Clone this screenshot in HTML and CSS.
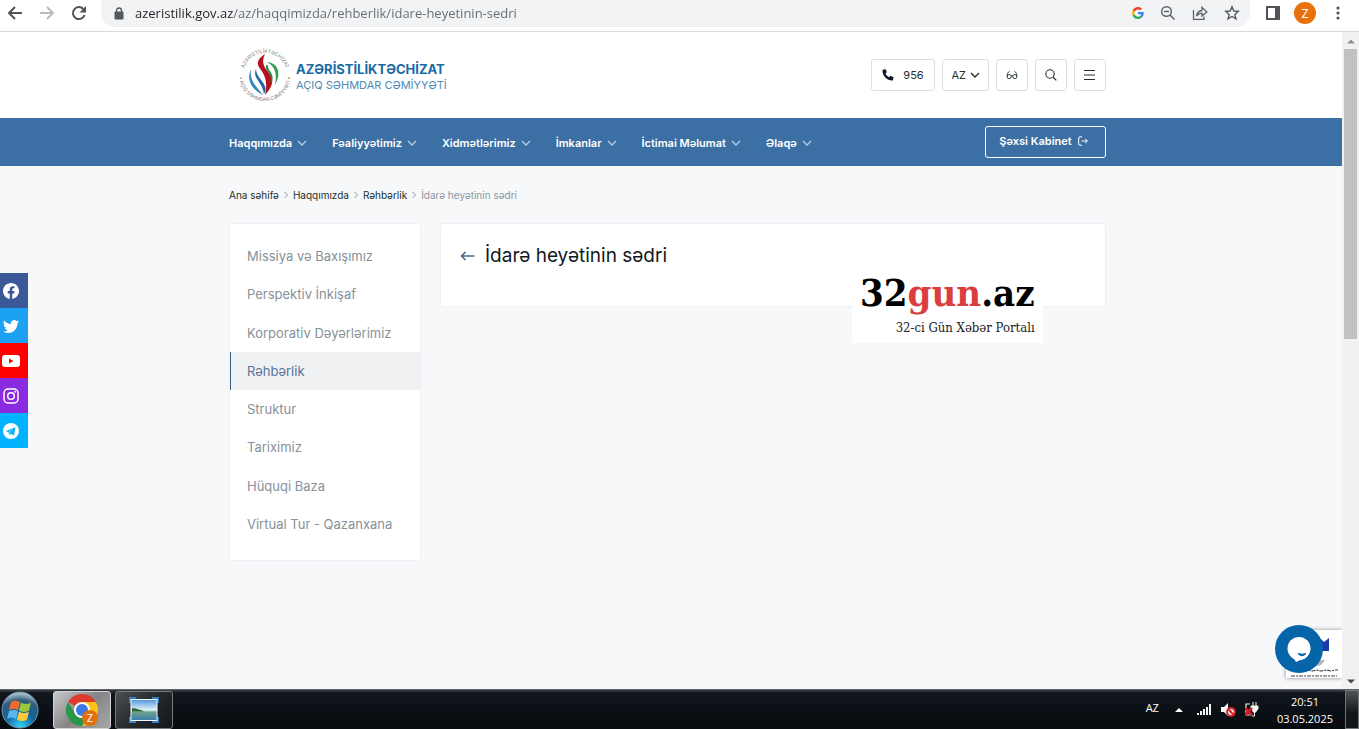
FILE: index.html
```html
<!DOCTYPE html>
<html lang="az">
<head>
    <meta charset="UTF-8">
    <meta name="viewport" content="width=device-width, initial-scale=1.0">
    <title>İdarə heyətinin sədri</title>
    <link rel="stylesheet" href="styles.css">
</head>
<body>

    <!-- Shared icons -->
    <svg class="sprite" aria-hidden="true">
        <symbol id="chevron" viewBox="0 0 10 10"><path d="M1 3l4 4 4-4" fill="none" stroke="currentColor" stroke-width="1.4"/></symbol>
        <symbol id="crumb" viewBox="0 0 6 8"><path d="M1.5 1l3 3-3 3" fill="none" stroke="currentColor"/></symbol>
    </svg>

    <!-- Browser toolbar -->
    <div class="browser-bar">
        <button class="tool back" aria-label="Back"><svg width="16" height="16" viewBox="0 0 16 16"><path d="M15 8H2M8 2L2 8l6 6" fill="none" stroke="#505357" stroke-width="2"/></svg></button>
        <button class="tool forward" aria-label="Forward"><svg width="16" height="16" viewBox="0 0 16 16"><path d="M1 8h13M8 2l6 6-6 6" fill="none" stroke="#b9bbbe" stroke-width="2"/></svg></button>
        <button class="tool reload" aria-label="Reload"><svg width="16" height="16" viewBox="0 0 16 16"><path d="M13.6 10A6 6 0 1 1 12.4 4" fill="none" stroke="#505357" stroke-width="2"/><path d="M15 1v6.500H8.500z" fill="#505357"/></svg></button>
        <div class="address">
            <svg width="10" height="13" viewBox="0 0 10 13"><path d="M2.500 5V3.500a2.500 2.500 0 0 1 5 0V5" fill="none" stroke="#55585d" stroke-width="1.400"/><rect x="0.500" y="4.500" width="9" height="8" rx="1" fill="#55585d"/></svg>
            <input class="url" type="text" aria-label="Address" value="azeristilik.gov.az/az/haqqimizda/rehberlik/idare-heyetinin-sedri">
            <div class="address-icons">
                <button class="tool" aria-label="Google"><svg width="12" height="12" viewBox="0 0 48 48"><path fill="#ea4335" d="M24 9.500c3.500 0 6.700 1.200 9.200 3.600l6.900-6.900C35.900 2.400 30.500 0 24 0 14.600 0 6.500 5.400 2.600 13.200l8 6.200C12.400 13.700 17.700 9.500 24 9.500z"/><path fill="#4285f4" d="M47 24.500c0-1.600-.2-3.100-.4-4.500H24v9h12.900c-.6 3-2.300 5.500-4.800 7.200l7.700 6C44.400 38 47 31.800 47 24.500z"/><path fill="#fbbc05" d="M10.500 28.600a14.500 14.500 0 0 1 0-9.200l-8-6.200a24 24 0 0 0 0 21.600z"/><path fill="#34a853" d="M24 48c6.500 0 11.900-2.100 15.900-5.800l-7.700-6c-2.200 1.500-4.900 2.300-8.200 2.300-6.300 0-11.600-4.200-13.500-9.900l-8 6.200C6.500 42.600 14.600 48 24 48z"/></svg></button>
                <button class="tool" aria-label="Zoom"><svg width="16" height="16" viewBox="0 0 16 16"><g fill="none" stroke="#5f6368" stroke-width="1.500"><circle cx="6.500" cy="6.500" r="4.800"/><path d="M10 10l4.500 4.500M4 6.500h5"/></g></svg></button>
                <button class="tool" aria-label="Share"><svg width="16" height="16" viewBox="0 0 16 16"><g fill="none" stroke="#5f6368" stroke-width="1.300"><path d="M1.500 5v9.300H12V11.500"/><path d="M4.500 11C5 7.500 7 5.700 10 5.500V2.300L14.800 7 10 11V8.200c-2.500 0-4 .8-5.500 2.800z"/></g></svg></button>
                <button class="tool" aria-label="Bookmark"><svg width="16" height="16" viewBox="0 0 16 16"><path d="M8 1.800l1.800 4.200 4.500.4-3.400 3 1 4.400L8 11.500l-3.900 2.300 1-4.400-3.400-3 4.500-.4z" fill="none" stroke="#55585d" stroke-width="1.400"/></svg></button>
            </div>
        </div>
        <div class="window-icons">
            <button class="tool" aria-label="Side panel"><svg width="14" height="14" viewBox="0 0 14 14"><path d="M0 0h14v14H0zM2 2v10h7V2z" fill="#505357" fill-rule="evenodd"/></svg></button>
            <button class="profile">Z</button>
            <button class="tool menu" aria-label="Menu"><svg width="4" height="14" viewBox="0 0 4 14"><g fill="#505357"><circle cx="2" cy="2" r="1.600"/><circle cx="2" cy="7" r="1.600"/><circle cx="2" cy="12" r="1.600"/></g></svg></button>
        </div>
    </div>

    <div class="viewport">
        <div class="page">
            <header class="header">
                <div class="container header-row">
                    <a class="logo" href="#">
                        <svg width="56" height="56" viewBox="0 0 56 56">
                            <path id="ring-top" d="M6 28A22 22 0 0 1 50 28" fill="none"/>
                            <path id="ring-bottom" d="M2 28A26 26 0 0 0 54 28" fill="none"/>
                            <text class="ring-text"><textPath href="#ring-top" startOffset="50%">AZƏRİSTİLİKTƏCHİZAT</textPath></text>
                            <text class="ring-text"><textPath href="#ring-bottom" startOffset="50%">• AÇIQ SƏHMDAR CƏMİYYƏTİ •</textPath></text>
                            <path d="M28 7C22 11 19 15 22 20C25 25 32 31 28 48C37 38 37 32 32 26C27 20 24 15 28 7z" fill="#b5121f"/>
                            <path d="M30 15C41 16 45 26 38 38C40 28 39 20 30 15z" fill="#35a04c"/>
                            <path d="M30 18C30 24 38 27 34 35C37 26 27 24 30 18z" fill="#218c3c" stroke="#218c3c"/>
                            <path d="M14 22C9 33 15 43 26 48C20 40 12 34 14 22z" fill="#2b86bd"/>
                            <path d="M19 22C15 31 25 34 27 47C33 37 19 32 19 22z" fill="#1f63a3"/>
                        </svg>
                        <span class="logo-text">
                            <strong>AZƏRİSTİLİKTƏCHİZAT</strong>
                            <span>AÇIQ SƏHMDAR CƏMİYYƏTİ</span>
                        </span>
                    </a>
                    <div class="header-tools">
                        <a class="box phone" href="#">
                            <svg width="12" height="12" viewBox="0 0 12 12"><path d="M1 .8L3 .3c.4-.1.700.1.800.400l.9 2.100c.1.300 0 .6-.2.800l-1 .9c.800 1.800 2 3 3.700 3.800l.9-1c.2-.3.500-.4.800-.2l2.200.9c.3.100.5.500.4.800l-.5 2.100c-.1.300-.4.600-.7.600C4.900 11.500.5 7 .5 1.500c0-.3.200-.6.500-.7z" fill="#0e1726"/></svg>
                            <span>956</span>
                        </a>
                        <div class="box lang">
                            <select aria-label="Dil">
                                <option>AZ</option>
                                <option>EN</option>
                            </select>
                            <svg width="10" height="10"><use href="#chevron"/></svg>
                        </div>
                        <button class="box" aria-label="Görmə"><svg width="12" height="12" viewBox="0 0 14 12"><g fill="none" stroke="#22302c" stroke-width="1.100"><circle cx="3.700" cy="7.800" r="2.400"/><circle cx="10.300" cy="7.800" r="2.400"/><path d="M6 7.200c.7-.6 1.300-.6 2 0M1.400 7.500C1.200 5 2 2.800 4.200 1.600M12.600 7.500C12.800 5 12 2.800 9.800 1.600"/></g></svg></button>
                        <button class="box" aria-label="Axtar"><svg width="12" height="12" viewBox="0 0 12 12"><g fill="none" stroke="#22302c" stroke-width="1.100"><circle cx="5" cy="5" r="4.200"/><path d="M8 8l3.300 3.300"/></g></svg></button>
                        <button class="box" aria-label="Menyu"><svg width="12" height="12" viewBox="0 0 12 12"><path d="M0 1.500h11M0 6h11M0 10.500h11" stroke="#22302c" stroke-width="1.200"/></svg></button>
                    </div>
                </div>
            </header>

            <nav class="navbar">
                <div class="container nav-row">
                    <ul class="nav-list">
                        <li><a href="#">Haqqımızda <svg width="10" height="10"><use href="#chevron"/></svg></a></li>
                        <li><a href="#">Fəaliyyətimiz <svg width="10" height="10"><use href="#chevron"/></svg></a></li>
                        <li><a href="#">Xidmətlərimiz <svg width="10" height="10"><use href="#chevron"/></svg></a></li>
                        <li><a href="#">İmkanlar <svg width="10" height="10"><use href="#chevron"/></svg></a></li>
                        <li><a href="#">İctimai Məlumat <svg width="10" height="10"><use href="#chevron"/></svg></a></li>
                        <li><a href="#">Əlaqə <svg width="10" height="10"><use href="#chevron"/></svg></a></li>
                    </ul>
                    <a class="cabinet" href="#">Şəxsi Kabinet
                        <svg width="10" height="10" viewBox="0 0 10 10"><path d="M4 .8H2Q.7.800.7 2v6Q.700 9.200 2 9.200h2M3.500 5h5.800M7.200 2.800L9.400 5 7.200 7.200" fill="none" stroke="#fff" stroke-width="1"/></svg>
                    </a>
                </div>
            </nav>

            <div class="container">
                <div class="breadcrumb">
                    <a href="#">Ana səhifə</a>
                    <svg width="6" height="8"><use href="#crumb"/></svg>
                    <a href="#">Haqqımızda</a>
                    <svg width="6" height="8"><use href="#crumb"/></svg>
                    <a href="#">Rəhbərlik</a>
                    <svg width="6" height="8"><use href="#crumb"/></svg>
                    <span>İdarə heyətinin sədri</span>
                </div>

                <div class="columns">
                    <aside class="card side-menu">
                        <a href="#">Missiya və Baxışımız</a>
                        <a href="#">Perspektiv İnkişaf</a>
                        <a href="#">Korporativ Dəyərlərimiz</a>
                        <a class="active" href="#">Rəhbərlik</a>
                        <a href="#">Struktur</a>
                        <a href="#">Tariximiz</a>
                        <a href="#">Hüquqi Baza</a>
                        <a href="#">Virtual Tur - Qazanxana</a>
                    </aside>
                    <main class="card content">
                        <a href="#" aria-label="Geri"><svg width="15" height="10" viewBox="0 0 15 10"><path d="M14.500 5H1.500M5.500 1l-4 4 4 4" fill="none" stroke="#44658a" stroke-width="1.500"/></svg></a>
                        <h1>İdarə heyətinin sədri</h1>
                    </main>
                </div>
            </div>

            <!-- Social links -->
            <div class="social">
                <a class="facebook" href="#" aria-label="Facebook"><svg width="16" height="16" viewBox="0 0 16 16"><path fill="#fff" d="M16 8.050C16 3.600 12.420 0 8 0S0 3.600 0 8.050C0 12.070 2.930 15.400 6.750 16v-5.620H4.720V8.050h2.030V6.270c0-2.020 1.200-3.130 3.020-3.130.88 0 1.790.16 1.790.16v1.980h-1c-1 0-1.310.62-1.310 1.260v1.510h2.220l-.36 2.330H9.250V16C13.070 15.400 16 12.070 16 8.050z"/></svg></a>
                <a class="twitter" href="#" aria-label="Twitter"><svg width="16" height="16" viewBox="0 0 16 16"><path fill="#fff" d="M5.030 15c6.030 0 9.340-5 9.340-9.330v-.43A6.700 6.700 0 0 0 16 3.540a6.500 6.500 0 0 1-1.890.52 3.300 3.300 0 0 0 1.450-1.820 6.500 6.500 0 0 1-2.090.79 3.290 3.290 0 0 0-5.600 3A9.300 9.300 0 0 1 1.110 2.600a3.290 3.290 0 0 0 1.020 4.380A3.300 3.300 0 0 1 .640 6.580v.04a3.290 3.290 0 0 0 2.630 3.220 3.200 3.200 0 0 1-1.480.06 3.290 3.290 0 0 0 3.070 2.280A6.600 6.600 0 0 1 0 13.540 9.300 9.300 0 0 0 5.030 15z"/></svg></a>
                <a class="youtube" href="#" aria-label="YouTube"><svg width="18" height="12" viewBox="0 0 18 12"><rect width="18" height="12" rx="3" fill="#fff"/><path d="M7 3.400v5.200L11.500 6z" fill="#f00"/></svg></a>
                <a class="instagram" href="#" aria-label="Instagram"><svg width="16" height="16" viewBox="0 0 16 16"><g fill="none" stroke="#fff" stroke-width="1.500"><rect x="1" y="1" width="14" height="14" rx="4"/><circle cx="8" cy="8" r="3.300"/></g><circle cx="12.200" cy="3.800" r="1" fill="#fff"/></svg></a>
                <a class="telegram" href="#" aria-label="Telegram"><svg width="16" height="16" viewBox="0 0 16 16"><circle cx="8" cy="8" r="8" fill="#fff"/><path d="M3 7.900l8.800-3.500c.5-.2.800.1.700.7l-1.500 6.800c-.1.500-.5.600-.9.400L7.800 10.700l-1.200 1.100c-.3.200-.4.100-.5-.2L5.300 9 3 8.300c-.4-.1-.4-.3 0-.4zM6 8.900l.4 1.700.3-1.400 3.800-3.500z" fill="#0ab3f5" fill-rule="evenodd"/></svg></a>
            </div>

            <!-- News portal mark -->
            <div class="portal">
                <div class="portal-name">32<span>gun</span>.az</div>
                <div class="portal-sub">32-ci Gün Xəbər Portalı</div>
            </div>

            <div class="captcha">
                <svg width="56" height="48" viewBox="0 0 56 48">
                    <path d="M35 9l3 3 5-4v13H31z" fill="#1c3aa9"/>
                    <path d="M27 30h12l-4 5q-5 2-10 0z" fill="#b4b6ba"/>
                    <path d="M10 41l4-1 3 1 5-1 4 1 5-1 4 1 6-1 4 1 4-1h3M5 46h46" fill="none" stroke="#3f434c" stroke-width="1.200" stroke-dasharray="4 1 2 1"/>
                </svg>
            </div>
            <button class="chat" aria-label="Chat"><svg width="48" height="48" viewBox="0 0 48 48"><circle cx="24" cy="24" r="24" fill="#0565a8"/><circle cx="24" cy="23.500" r="11.500" fill="#fff"/><path d="M18 32l3 5 9-4z" fill="#fff"/><path d="M23 28.500q4 1.500 8 0-4 4.500-8 0z" fill="#0565a8" stroke="#0565a8"/></svg></button>
        </div>

        <div class="scrollbar">
            <svg width="8" height="5" viewBox="0 0 8 5"><path d="M0 4.500h8L4 .5z" fill="#8d8d8d"/></svg>
            <div class="thumb"></div>
            <svg class="down" width="8" height="5" viewBox="0 0 8 5"><path d="M0 .5h8L4 4.500z" fill="#45484c"/></svg>
        </div>
    </div>

    <!-- Windows taskbar -->
    <div class="taskbar">
        <button class="start" aria-label="Start">
            <svg width="38" height="38" viewBox="0 0 38 38">
                <defs>
                    <radialGradient id="orb" cx=".5" cy=".95" r=".9"><stop offset="0" stop-color="#35d3f5"/><stop offset=".45" stop-color="#11649f"/><stop offset=".8" stop-color="#315b78"/><stop offset="1" stop-color="#a3bccb"/></radialGradient>
                </defs>
                <circle cx="19" cy="19" r="18" fill="url(#orb)" stroke="#7193a8"/>
                <path d="M10 11q4-3 9 0l-2 8q-4-2-9 0z" fill="#ee6b2d"/>
                <path d="M20 11.500q5 3 10 0l-2 8q-5 3-10 0z" fill="#9ac93b"/>
                <path d="M8 20q5-2 9 0l-2 8q-4-3-9 0z" fill="#5ab6ec"/>
                <path d="M18 20.500q5 3 10 0l-2 8q-5 3-10 0z" fill="#fcca3d"/>
            </svg>
        </button>
        <button class="task chrome" aria-label="Chrome">
            <svg width="34" height="34" viewBox="0 0 34 34">
                <path d="M17 17L3.100 9A16 16 0 0 1 30.900 9z" fill="#dc3b2e"/>
                <path d="M17 9h13.900A16 16 0 0 1 17 33l7-12z" fill="#fbc116"/>
                <path d="M17 33A16 16 0 0 1 3.100 9L10 21l7 4 5-1z" fill="#299748"/>
                <circle cx="17" cy="17" r="8" fill="#fff"/>
                <circle cx="17" cy="17" r="6" fill="#3c79e6"/>
                <circle cx="25" cy="25" r="8" fill="#e2700f"/>
                <text class="chrome-user" x="25" y="29">Z</text>
            </svg>
        </button>
        <button class="task" aria-label="Viewer">
            <svg width="30" height="26" viewBox="0 0 30 26">
                <defs><linearGradient id="sky" x2="0" y2="1"><stop offset="0" stop-color="#4a98e0"/><stop offset=".5" stop-color="#e3f2f8"/><stop offset=".6" stop-color="#6f9f8c"/><stop offset="1" stop-color="#3a7fae"/></linearGradient></defs>
                <path d="M0 0h7v6H0zM23 0h7v6h-7zM0 20h7v6H0zM23 20h7v6h-7z" fill="#367dc2"/>
                <rect x="2" y="2.500" width="26" height="21" fill="url(#sky)" stroke="#f1f6f8"/>
                <path d="M3 11q8 1 12 3.500H3z" fill="#2f6638"/>
            </svg>
        </button>
        <div class="tray">
            <span class="tray-lang">AZ</span>
            <svg class="tray-up" width="8" height="4" viewBox="0 0 8 4"><path d="M0 4h8L4 0z" fill="#fff"/></svg>
            <svg class="tray-signal" width="14" height="11" viewBox="0 0 14 11"><path d="M0 9h2v2H0zM3 7h2v4H3zM6 5h2v6H6zM9 3h2v8H9zM12 0h2v11h-2z" fill="#f4f4f4"/></svg>
            <svg class="tray-sound" width="15" height="14" viewBox="0 0 15 14"><path d="M0 4h3l4-4v13L3 9H0z" fill="#f4f4f4"/><circle cx="10" cy="9" r="4" fill="#e9d7d7" stroke="#d4222a" stroke-width="1.800"/><path d="M7 6l6 6" stroke="#d4222a" stroke-width="1.800"/></svg>
            <svg class="tray-power" width="14" height="15" viewBox="0 0 14 15"><path d="M5 2H1v11h5" fill="none" stroke="#eee" stroke-width="1.200"/><path d="M8 0v4M11 0v4M6 4h7v3l-2 2v1H8V9L6 7z" fill="#f4f4f4" stroke="#f4f4f4"/><path d="M9.500 9v5H7" fill="none" stroke="#f4f4f4"/><path d="M0 6l7 7M7 6l-7 7" stroke="#dd1720" stroke-width="2.600"/></svg>
            <div class="clock">20:51<br>03.05.2025</div>
            <button class="show-desktop" aria-label="Show desktop"></button>
        </div>
    </div>

</body>
</html>
```

FILE: styles.css
```css
* {
    box-sizing: border-box;
}
body {
    font-family: Inter, sans-serif;
    margin: 0;
    height: 100vh;
    display: flex;
    flex-direction: column;
    overflow: hidden;
    background-color: #f6f8fa;
    color: #22302c;
}
a {
    color: inherit;
    text-decoration: none;
}
button {
    font-family: inherit;
    border: none;
    padding: 0;
    background: none;
    cursor: pointer;
}
svg {
    display: block;
    flex: none;
}
.sprite {
    position: absolute;
    width: 0;
    height: 0;
}

/* Browser toolbar */
.browser-bar {
    display: flex;
    align-items: center;
    height: 32px;
    padding: 0 19px 5px 7px;
    gap: 16px;
    background-color: #fff;
    border-bottom: 1px solid #d6d8da;
}
.address {
    flex: 1;
    display: flex;
    align-items: center;
    height: 28px;
    margin-left: -2px;
    padding: 0 10px 0 13px;
    background-color: #f1f3f4;
    border-radius: 0 0 14px 14px;
}
.url {
    flex: 1;
    border: none;
    outline: none;
    margin-left: 11px;
    padding: 0;
    font-family: "Open Sans", sans-serif;
    font-size: 13px;
    line-height: 20px;
    background: linear-gradient(90deg, #202124 98px, #666a6e 98px);
    -webkit-background-clip: text;
    background-clip: text;
    color: transparent;
}
.address-icons {
    display: flex;
    align-items: center;
    gap: 16px;
}
.window-icons {
    display: flex;
    align-items: center;
    gap: 14px;
}
.profile {
    width: 22px;
    height: 22px;
    border-radius: 50%;
    background-color: #e8710a;
    color: #fff;
    font-size: 12px;
}
.menu {
    width: 10px;
    display: flex;
    justify-content: flex-end;
}

/* Page area */
.viewport {
    flex: 1;
    display: flex;
    min-height: 0;
}
.page {
    flex: 1;
    position: relative;
    overflow: hidden;
}
.container {
    max-width: 884px;
    margin: 0 auto;
    padding-right: 7px;
}
.header {
    background-color: #fff;
}
.header-row {
    display: flex;
    align-items: center;
    justify-content: space-between;
    height: 86px;
}
.logo {
    display: flex;
    align-items: center;
    gap: 3px;
    margin-left: 8px;
}
.ring-text {
    font-size: 5px;
    text-anchor: middle;
    fill: #7d8187;
}
.logo-text {
    display: flex;
    flex-direction: column;
    padding-top: 3px;
    font-size: 11px;
    line-height: 16px;
    color: #4d8ab5;
}
.logo-text strong {
    font-size: 13px;
    color: #1a6aa5;
}
.header-tools {
    display: flex;
    gap: 7px;
}
.box {
    display: flex;
    align-items: center;
    justify-content: center;
    width: 32px;
    height: 32px;
    border: 1px solid #dcdee0;
    border-radius: 3px;
    font-size: 11px;
}
.phone {
    width: 64px;
    gap: 9px;
}
.lang {
    width: 47px;
}
.lang select {
    appearance: none;
    border: none;
    background: none;
    padding: 0;
    width: 18px;
    font-family: inherit;
    font-size: 11px;
    color: inherit;
}

.navbar {
    background-color: #3c6fa3;
    color: #fff;
}
.nav-row {
    display: flex;
    align-items: center;
    justify-content: space-between;
    height: 48px;
}
.nav-list {
    display: flex;
    gap: 25px;
    margin: 0;
    padding: 1px 0 0;
    list-style: none;
    font-size: 11px;
    font-weight: 600;
}
.nav-list a {
    display: flex;
    align-items: center;
    gap: 5px;
}
.nav-list svg {
    color: #b5cbe3;
}
.cabinet {
    display: flex;
    align-items: center;
    justify-content: center;
    gap: 6px;
    width: 121px;
    height: 32px;
    padding: 0 4px 2px 0;
    border: 1px solid #fff;
    border-radius: 3px;
    font-size: 11px;
    font-weight: 600;
}

.breadcrumb {
    display: flex;
    align-items: center;
    gap: 4px;
    padding: 21px 0 20px;
    font-size: 10px;
    line-height: 16px;
}
.breadcrumb svg,
.breadcrumb span {
    color: #8c969f;
}
.columns {
    display: grid;
    grid-template-columns: 192px 1fr;
    gap: 19px;
    align-items: start;
}
.card {
    background-color: #fff;
    border: 1px solid #eef0f3;
    border-radius: 3px;
}
.side-menu {
    display: grid;
    grid-auto-rows: 1fr;
    min-height: 338px;
    padding: 13px 0 17px;
    font-size: 13px;
    color: #87919a;
}
.side-menu a {
    display: flex;
    align-items: center;
    padding: 0 16px;
    border-left: 1px solid transparent;
}
.side-menu .active {
    background-color: #eff1f3;
    border-left-color: #3d608a;
    color: #577399;
}
.content {
    display: flex;
    align-items: center;
    gap: 10px;
    padding: 19px 19px 37px;
}
.content h1 {
    margin: 0;
    font-size: 19px;
    line-height: 26px;
    font-weight: 400;
    color: #101820;
}

/* Floating parts */
.social {
    position: absolute;
    left: 0;
    top: 241px;
}
.social a {
    display: flex;
    align-items: center;
    width: 28px;
    height: 35px;
    padding-left: 3px;
}
.facebook {
    background-color: #3b5998;
}
.twitter {
    background-color: #1da1f2;
}
.youtube {
    background-color: #f00;
}
.instagram {
    background-color: #8a2be2;
}
.telegram {
    background-color: #00b2ff;
}
.social .youtube {
    padding-left: 2px;
}
.portal {
    position: absolute;
    left: 852px;
    top: 236px;
    padding: 0 8px 6px;
    background-color: #fff;
    font-family: "DejaVu Serif Condensed", "DejaVu Serif", serif;
    text-align: right;
    color: #000;
}
.portal-name {
    font-size: 38px;
    line-height: 50px;
    font-weight: bold;
}
.portal-name span {
    color: #da3e3e;
}
.portal-sub {
    font-size: 13px;
    line-height: 19px;
    color: #222;
}
.captcha {
    position: absolute;
    right: 0;
    bottom: 11px;
    background-color: #fff;
    box-shadow: 0 0 4px #888;
}
.chat {
    position: absolute;
    right: 19px;
    bottom: 16px;
}

.scrollbar {
    display: flex;
    flex-direction: column;
    align-items: center;
    width: 17px;
    padding: 7px 0 5px;
    background-color: #f1f1f1;
}
.thumb {
    width: 13px;
    flex: 0 0 45%;
    margin-top: 5px;
    background-color: #c1c1c1;
}
.down {
    margin-top: auto;
}

/* Taskbar */
.taskbar {
    display: flex;
    align-items: center;
    height: 40px;
    background: linear-gradient(#394148 0, #10161c 3px, #070b10 100%);
    border-top: 1px solid #5d6266;
    color: #fff;
}
.start {
    width: 53px;
    padding-left: 1px;
}
.task {
    display: flex;
    align-items: center;
    justify-content: center;
    width: 58px;
    height: 38px;
    margin-right: 4px;
    border: 1px solid #777b7f;
    border-radius: 3px;
    background: linear-gradient(135deg, #4b5054, #25292d 50%, #14181c);
}
.chrome {
    border-color: #d3d3d3;
    background: linear-gradient(135deg, #c9c9c9, #858585 50%, #a7a7a7);
}
.chrome-user {
    font-size: 10px;
    text-anchor: middle;
    fill: #fff;
}
.tray {
    display: flex;
    align-items: center;
    height: 100%;
    margin-left: auto;
    font-family: "Open Sans", sans-serif;
    font-size: 11px;
}
.tray-lang {
    margin-right: 16px;
    padding-bottom: 4px;
}
.tray-up {
    margin-right: 14px;
}
.tray-signal {
    margin-right: 10px;
}
.tray-sound {
    margin-right: 9px;
}
.tray-power {
    margin-right: 18px;
}
.clock {
    line-height: 17px;
    margin-right: 12px;
    text-align: center;
}
.show-desktop {
    width: 14px;
    height: 100%;
    border: 1px solid #72777c;
    background: linear-gradient(#50555a, #12161a 60%);
}
```
